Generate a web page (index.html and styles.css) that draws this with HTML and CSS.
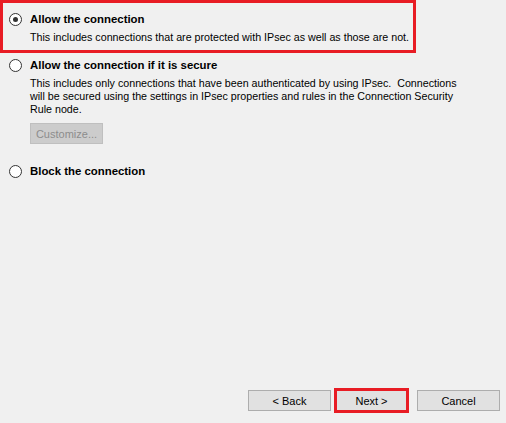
FILE: index.html
```html
<!DOCTYPE html>
<html>
<head>
<meta charset="utf-8">
<link rel="stylesheet" href="styles.css">
</head>
<body>
<div class="page">
  <div class="options">
    <div class="option highlight">
      <div class="opt-head"><span class="radio checked"></span><span class="title">Allow the connection</span></div>
      <div class="desc">This includes connections that are protected with IPsec as well as those are not.</div>
    </div>
    <div class="option second">
      <div class="opt-head"><span class="radio"></span><span class="title">Allow the connection if it is secure</span></div>
      <div class="desc">This includes only connections that have been authenticated by using IPsec.&nbsp; Connections will be secured using the settings in IPsec properties and rules in the Connection Security Rule node.</div>
      <button class="btn customize" disabled>Customize...</button>
    </div>
    <div class="option third">
      <div class="opt-head"><span class="radio"></span><span class="title">Block the connection</span></div>
    </div>
  </div>
  <div class="footer">
    <button class="btn back">&lt; Back</button>
    <button class="btn next">Next &gt;</button>
    <button class="btn cancel">Cancel</button>
  </div>
</div>
</body>
</html>
```
FILE: styles.css
```css
html, body {
  margin: 0;
  padding: 0;
  background: #f0f0f0;
}
body {
  font-family: "Liberation Sans", Arial, sans-serif;
  font-size: 10.7px;
  color: #000;
}
.page {
  width: 506px;
  height: 423px;
  display: flex;
  flex-direction: column;
  box-sizing: border-box;
}
.options {
  flex: 1;
  display: flex;
  flex-direction: column;
}
.option {
  padding-left: 9px;
}
.highlight {
  width: 416px;
  height: 53px;
  box-sizing: border-box;
  border: 3px solid #e81c24;
  padding: 9px 0 0 6px;
}
.opt-head {
  display: flex;
  align-items: center;
  height: 14px;
}
.radio {
  width: 11px;
  height: 11px;
  border: 1px solid #333;
  border-radius: 50%;
  background: #fff;
  position: relative;
  box-sizing: content-box;
  margin-right: 8px;
  flex: none;
}
.radio.checked::after {
  content: "";
  position: absolute;
  left: 3px;
  top: 3px;
  width: 5px;
  height: 5px;
  border-radius: 50%;
  background: #333;
}
.title {
  font-weight: bold;
  font-size: 11.4px;
}
.desc {
  margin-left: 21px;
  margin-top: 5px;
  line-height: 13px;
  width: 432px;
  color: #000;
}
.second {
  margin-top: 5px;
}
.third {
  margin-top: 20px;
}
.btn {
  font-family: "Liberation Sans", Arial, sans-serif;
  font-size: 11px;
  background: #e1e1e1;
  border: 1px solid #adadad;
  color: #000;
  padding: 0;
  box-sizing: border-box;
}
.customize {
  margin: 7px 0 0 21px;
  width: 73px;
  height: 21px;
  background: #cccccc;
  border-color: #bfbfbf;
  color: #8d8d8d;
}
.footer {
  display: flex;
  justify-content: flex-end;
  align-items: center;
  padding: 0 6px 10px 0;
}
.back, .cancel {
  width: 83px;
  height: 21px;
}
.back {
  margin-right: 3px;
}
.next {
  width: 75px;
  height: 25px;
  border: 3px solid #e81c24;
  margin-right: 8px;
}
```
